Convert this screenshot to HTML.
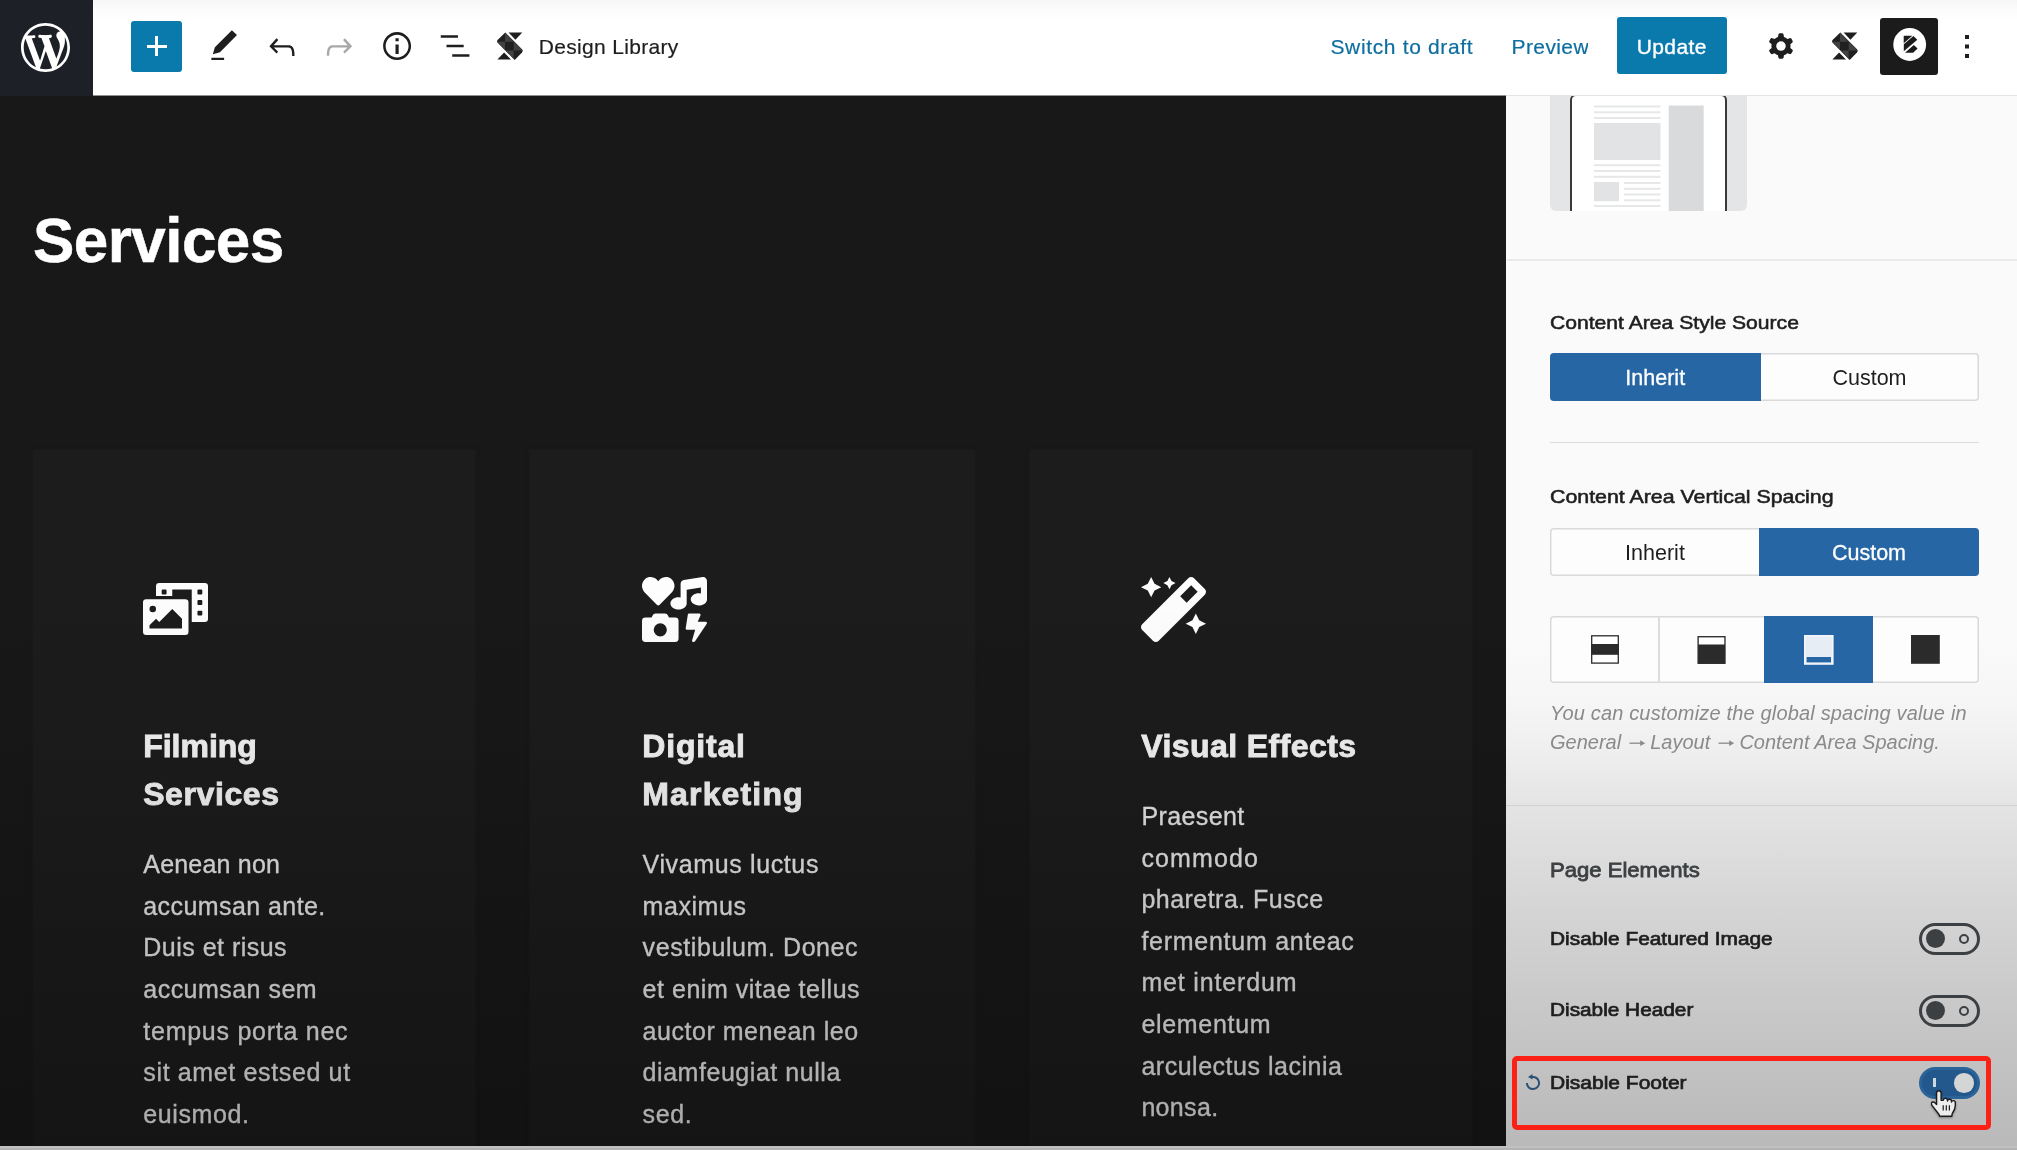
<!DOCTYPE html>
<html>
<head>
<meta charset="utf-8">
<title>Edit Page</title>
<style>
*{box-sizing:border-box;margin:0;padding:0}
html,body{width:2017px;height:1150px;overflow:hidden;background:#181818;font-family:"Liberation Sans",sans-serif}
.abs{position:absolute}
#root{position:relative;width:2017px;height:1150px;overflow:hidden;will-change:transform}
/* toolbar */
#toolbar{position:absolute;left:0;top:0;width:2017px;height:95px;background:linear-gradient(#f6f6f6 0,#fcfcfc 10px,#fff 20px)}
#tbedge{position:absolute;left:92px;top:95px;width:1414px;height:1px;background:#8f8f8f}
#wp{position:absolute;left:0;top:0;width:92.600px;height:96px;background:#1e2027}
#plus{position:absolute;left:131px;top:21px;width:51px;height:51px;background:#0a7aad;border-radius:3px}
.tbtxt{position:absolute;font-size:21px;line-height:26px;white-space:nowrap;color:#1e1e1e;-webkit-text-stroke:.2px currentColor}
.link{color:#0d6e9f}
#update{position:absolute;left:1617px;top:17px;width:109.500px;height:57px;background:#0a7aad;border-radius:3px;color:#fff;font-size:21px;line-height:59.400px;text-align:center;letter-spacing:.4px;-webkit-text-stroke:.35px #fff}
#kbox{position:absolute;left:1880.300px;top:17.600px;width:57.700px;height:57.200px;background:#1b1b1b;border-radius:3px}
/* canvas */
#canvas{position:absolute;left:0;top:95px;width:1506px;height:1055px;background:#181818}
.card{position:absolute;top:450px;height:700px;background:#1c1c1c;box-shadow:0 0 3px 1px #1b1b1b}
h1{position:absolute;left:33px;top:203px;font-size:62px;line-height:76px;font-weight:bold;color:#fff;letter-spacing:-0.55px;-webkit-text-stroke:.5px #fff;transform:scaleY(1.012);transform-origin:0 59.5px}
.ch{position:absolute;font-size:32px;line-height:48.2px;font-weight:bold;color:#f6f6f6;white-space:nowrap;-webkit-text-stroke:.9px #f6f6f6}
.cp{position:absolute;font-size:25px;line-height:41.6px;color:#e8e8e8;white-space:nowrap;-webkit-text-stroke:.3px #e8e8e8}.ch span,.cp span{display:block}
#shade{position:absolute;left:0;top:560px;width:1506px;height:586px;background:linear-gradient(rgba(0,0,0,0) 0,rgba(0,0,0,.04) 25%,rgba(0,0,0,.12) 50%,rgba(0,0,0,.2) 75%,rgba(0,0,0,.27) 100%)}
/* sidebar */
#side{position:absolute;left:1506px;top:95px;width:511px;height:1055px;background:linear-gradient(#fafafa 0px,#fafafa 545px,#f6f6f6 605px,#ededed 665px,#e4e4e4 710px,#d6d6d6 805px,#c9c9c9 905px,#bebebe 1005px,#b9b9b9 1055px);border-top:1px solid #e2e2e2}
.lbl{position:absolute;left:1550px;font-size:18.600px;line-height:24px;font-weight:normal;color:#1e1e1e;white-space:nowrap;-webkit-text-stroke:.55px currentColor;transform-origin:0 50%}
.seg{position:absolute;left:1550px;width:429px;height:48px;box-shadow:inset 0 0 0 1.5px #d9d9d9;border-radius:4px;background:#fdfdfd;overflow:hidden}
.seg div{position:absolute;top:0;height:48px;line-height:50px;text-align:center;font-size:21.5px;color:#1e1e1e}
.seg .on{background:#2766a4;color:#fff;-webkit-text-stroke:.3px #fff}
.hr{position:absolute;height:1px;background:#dcdcdc}
#bottom{position:absolute;left:0;top:1146px;width:2017px;height:4px;background:linear-gradient(#bdbdbd 0,#c2c2c2 1.500px,#b3b3b3 2.500px)}

.l2{font-size:18.500px;color:#1e1e1e;-webkit-text-stroke:.7px currentColor}
.help{position:absolute;left:1550px;font-size:20px;line-height:28px;font-style:italic;color:#8a8a8a;white-space:nowrap;letter-spacing:.17px}
.help .ar{display:inline-block;vertical-align:0px}.g1{display:inline-block;width:7.5px}.g2{display:inline-block;width:4.600px}
.tog{position:absolute;left:1918.5px;width:61px;height:31.5px;border:3px solid #3c4043;border-radius:16px}
.tog i{position:absolute;left:4px;top:3.2px;width:19px;height:19px;border-radius:50%;background:#3c4043}
.tog b{position:absolute;left:37px;top:7.6px;width:10.4px;height:10.4px;border-radius:50%;border:2.2px solid #3c4043}
.tog.on{background:#22588c;border-color:#2a6499}
.tog.on i{left:32.600px;top:3.100px;width:19.600px;height:19.600px;background:#d4d6d5}
.tog.on b{left:11.400px;top:8px;width:3.400px;height:9.400px;border:none;border-radius:0;background:#cfd8e0}
</style>
</head>
<body>
<div id="root">
<div id="canvas"></div>
<div class="card" style="left:33px;width:442px"></div>
<div class="card" style="left:530px;width:445px"></div>
<div class="card" style="left:1030px;width:442px"></div>
<h1>Services</h1>
<div class="ch" style="left:143.2px;top:721.5px"><span style="letter-spacing:-0.011px">Filming</span><span style="letter-spacing:0.59px">Services</span></div>
<div class="ch" style="left:642.3px;top:721.5px"><span style="letter-spacing:0.800px">Digital</span><span style="letter-spacing:1.150px">Marketing</span></div>
<div class="ch" style="left:1141.2px;top:721.5px"><span style="letter-spacing:0.432px">Visual Effects</span></div>
<div class="cp" style="left:143.3px;top:844.2px"><span style="letter-spacing:0.193px">Aenean non</span><span style="letter-spacing:0.423px">accumsan ante.</span><span style="letter-spacing:0.479px">Duis et risus</span><span style="letter-spacing:0.47px">accumsan sem</span><span style="letter-spacing:0.742px">tempus porta nec</span><span style="letter-spacing:0.639px">sit amet estsed ut</span><span style="letter-spacing:0.607px">euismod.</span></div>
<div class="cp" style="left:642.6px;top:844.2px"><span style="letter-spacing:0.625px">Vivamus luctus</span><span style="letter-spacing:0.547px">maximus</span><span style="letter-spacing:0.584px">vestibulum. Donec</span><span style="letter-spacing:0.524px">et enim vitae tellus</span><span style="letter-spacing:0.532px">auctor menean leo</span><span style="letter-spacing:0.543px">diamfeugiat nulla</span><span style="letter-spacing:0.578px">sed.</span></div>
<div class="cp" style="left:1141.4px;top:796.0px"><span style="letter-spacing:0.405px">Praesent</span><span style="letter-spacing:1.122px">commodo</span><span style="letter-spacing:0.472px">pharetra. Fusce</span><span style="letter-spacing:0.733px">fermentum anteac</span><span style="letter-spacing:0.837px">met interdum</span><span style="letter-spacing:0.691px">elementum</span><span style="letter-spacing:0.52px">arculectus lacinia</span><span style="letter-spacing:0.328px">nonsa.</span></div>
<svg class="abs" style="left:143px;top:583.100px" width="65" height="52" viewBox="0 0 640 512"><path fill="#fff" d="M608 0H160a32 32 0 0 0-32 32v96h160V64h192v320h128a32 32 0 0 0 32-32V32a32 32 0 0 0-32-32zM232 103a9 9 0 0 1-9 9h-30a9 9 0 0 1-9-9V73a9 9 0 0 1 9-9h30a9 9 0 0 1 9 9zm352 208a9 9 0 0 1-9 9h-30a9 9 0 0 1-9-9v-30a9 9 0 0 1 9-9h30a9 9 0 0 1 9 9zm0-104a9 9 0 0 1-9 9h-30a9 9 0 0 1-9-9v-30a9 9 0 0 1 9-9h30a9 9 0 0 1 9 9zm0-104a9 9 0 0 1-9 9h-30a9 9 0 0 1-9-9V73a9 9 0 0 1 9-9h30a9 9 0 0 1 9 9zm-168 57H32a32 32 0 0 0-32 32v288a32 32 0 0 0 32 32h384a32 32 0 0 0 32-32V192a32 32 0 0 0-32-32zM96 224a32 32 0 1 1-32 32 32 32 0 0 1 32-32zm288 224H64v-32l64-64 32 32 128-128 96 96z"/></svg>
<svg class="abs" style="left:642.3px;top:577px" width="65" height="65" viewBox="0 0 512 512"><path fill="#fff" d="M116.65 219.35a15.680 15.680 0 0 0 22.650 0l96.750-99.830c28.150-29 26.500-77.100-4.910-103.880C203.750-7.700 163-3.500 137.860 22.440L128 32.580l-9.850-10.140C93.050-3.500 52.250-7.700 24.860 15.640c-31.410 26.780-33 74.850-5 103.880zm143.920 100.490h-48l-7.080-14.240a27.390 27.390 0 0 0-25.660-17.780h-71.710a27.390 27.390 0 0 0-25.660 17.780l-7 14.240h-48A27.450 27.450 0 0 0 0 347.300v137.250A27.440 27.440 0 0 0 27.430 512h233.140A27.450 27.450 0 0 0 288 484.550V347.300a27.450 27.450 0 0 0-27.430-27.460zM144 468a52 52 0 1 1 52-52 52 52 0 0 1-52 52zm355.400-115.900h-60.580l22.360-50.750c2.100-6.650-3.930-13.210-12.180-13.210h-75.590c-6.300 0-11.660 3.900-12.500 9.100l-16.800 106.930c-1 6.300 4.880 11.890 12.500 11.890h62.310l-24.200 83c-1.890 6.650 4.200 12.900 12.230 12.900a13.260 13.260 0 0 0 10.920-5.250l92.400-138.910c4.880-6.910-1.160-15.700-10.870-15.700zM478.080.33L329.510 23.170C314.870 25.420 304 38.920 304 54.830V161.600a83.250 83.250 0 0 0-16-1.700c-35.350 0-64 21.480-64 48s28.650 48 64 48c35.200 0 63.730-21.320 64-47.660V99.660l112-17.220v47.180a83.250 83.250 0 0 0-16-1.700c-35.350 0-64 21.480-64 48s28.650 48 64 48c35.200 0 63.730-21.320 64-47.660V32c0-19.480-16-34.420-33.920-31.670z"/></svg>
<svg class="abs" style="left:1141.300px;top:577px" width="65" height="65" viewBox="0 0 512 512"><path fill="#fff" d="M224 96l16-32 32-16-32-16-16-32-16 32-32 16 32 16 16 32zM80 160l26.660-53.330L160 80l-53.340-26.670L80 0 53.340 53.330 0 80l53.340 26.670L80 160zm352 128l-26.660 53.330L352 368l53.340 26.670L432 448l26.660-53.330L512 368l-53.340-26.670L432 288zm70.620-193.770L417.770 9.380C411.530 3.120 403.340 0 395.150 0c-8.190 0-16.380 3.120-22.630 9.380L9.380 372.520c-12.500 12.500-12.500 32.760 0 45.250l84.850 84.850c6.250 6.250 14.440 9.370 22.620 9.370 8.190 0 16.380-3.120 22.630-9.370l363.140-363.150c12.500-12.480 12.500-32.750 0-45.240zM359.450 203.460l-50.910-50.910 86.600-86.600 50.910 50.910-86.600 86.600z"/></svg>


<div id="shade"></div>
<div id="side"></div>
<!-- thumbnail -->
<div class="abs" style="left:1550px;top:96px;width:197px;height:115px;background:#e4e5e6;border-radius:0 0 6px 6px"></div>
<div class="abs" style="left:1570px;top:93.500px;width:157px;height:117.500px;background:#fff;border:2px solid #3a3a3a;border-bottom:none;border-radius:6px 6px 0 0"></div>
<div class="abs" style="left:1506px;top:95px;width:511px;height:1px;background:#e4e4e4"></div>
<svg class="abs" style="left:1590px;top:100px" width="120" height="111" viewBox="1590 100 120 111">
 <g fill="#e6e7e8">
  <rect x="1594" y="105.5" width="66.5" height="2"/><rect x="1594" y="111.3" width="66.5" height="2"/><rect x="1594" y="117" width="66.5" height="2"/>
  <rect x="1594" y="123" width="66.5" height="37" fill="#e2e3e4"/>
  <rect x="1594" y="164.2" width="66.5" height="2"/><rect x="1594" y="170" width="66.5" height="2"/><rect x="1594" y="175.8" width="66.5" height="2"/>
  <rect x="1594" y="182" width="25" height="19.2" fill="#e2e3e4"/>
  <rect x="1624" y="182" width="36.5" height="2"/><rect x="1624" y="187.8" width="36.5" height="2"/><rect x="1624" y="193.5" width="36.5" height="2"/><rect x="1624" y="199.3" width="36.5" height="2"/>
  <rect x="1594" y="205" width="66.5" height="2"/>
  <rect x="1668.7" y="105.5" width="35" height="106" fill="#d9dadb"/>
 </g>
</svg>
<div class="hr" style="left:1507px;top:259px;width:510px;height:2px;background:#e9e9e9"></div>

<div class="lbl" style="top:311px;transform:scaleX(1.136)">Content Area Style Source</div>
<div class="seg" style="top:353px"><div class="on" style="left:0;width:210.5px">Inherit</div><div style="left:210px;width:219px">Custom</div></div>
<div class="hr" style="left:1550px;top:441.6px;width:429px"></div>

<div class="lbl" style="top:485.300px;transform:scaleX(1.148)">Content Area Vertical Spacing</div>
<div class="seg" style="top:528px"><div style="left:0;width:210px">Inherit</div><div class="on" style="left:209px;width:220px">Custom</div></div>

<div class="seg" style="top:616px;height:67px">
 <div style="left:107.500px;width:2px;height:67px;background:#dcdcdc"></div>
 <div class="on" style="left:214px;width:109px;height:67px"></div>
</div>
<!-- spacing icons -->
<svg class="abs" style="left:1590px;top:634px" width="352" height="32" viewBox="1590 634 352 32">
 <rect x="1591.700" y="635.800" width="26.600" height="27.300" fill="#fff" stroke="#2b2b2b" stroke-width="1.300"/>
 <rect x="1591.100" y="644" width="27.800" height="10.800" fill="#2b2b2b"/>
 <rect x="1698.100" y="636.700" width="26.900" height="26.600" fill="#2b2b2b" stroke="#2b2b2b" stroke-width="1.300"/>
 <rect x="1698.800" y="637.400" width="25.500" height="7.100" fill="#fff"/>
 <rect x="1804.800" y="635.800" width="28" height="28.200" fill="#e6edf5" stroke="#f3f6fa" stroke-width="1.600"/>
 <rect x="1806.600" y="657" width="24.400" height="5.400" fill="#2766a4"/>
 <rect x="1911" y="635" width="28.800" height="28.800" fill="#2b2b2b"/>
</svg>
<div class="help" style="top:699px">You can customize the global spacing value in</div>
<div class="help" style="top:727.500px;letter-spacing:0">General<span class="g1"></span><svg class="ar" width="17" height="12" viewBox="0 0 17 12"><path d="M0.500 6.200H12.500" fill="none" stroke="#8a8a8a" stroke-width="1.300"/><path d="M11.200 3.300L16.200 6.200 11.200 9.100z" fill="#8a8a8a"/></svg><span class="g2"></span>Layout<span class="g1"></span><svg class="ar" width="17" height="12" viewBox="0 0 17 12"><path d="M0.500 6.200H12.500" fill="none" stroke="#8a8a8a" stroke-width="1.300"/><path d="M11.200 3.300L16.200 6.200 11.200 9.100z" fill="#8a8a8a"/></svg><span class="g2"></span>Content Area Spacing.</div>
<div class="hr" style="left:1506px;top:805px;width:511px;background:#d1d1d1"></div>

<div class="lbl" style="top:857.900px;font-size:20.600px;color:#3c4043;-webkit-text-stroke:.8px #3c4043;transform:scaleX(1.072)">Page Elements</div>
<div class="lbl l2" style="top:926.700px;transform:scaleX(1.128)">Disable Featured Image</div>
<div class="tog" style="top:923px"><i></i><b></b></div>
<div class="lbl l2" style="top:998.200px;transform:scaleX(1.124)">Disable Header</div>
<div class="tog" style="top:995px"><i></i><b></b></div>

<div class="abs" style="left:1512.100px;top:1056.200px;width:479.400px;height:74.200px;border:5.400px solid #fb2117;border-radius:5px"></div>
<svg class="abs" style="left:1523.600px;top:1073.500px" width="18" height="18" viewBox="0 0 18 18"><path d="M8 3A6.100 6.100 0 1 1 2.900 9" fill="none" stroke="#2a5073" stroke-width="2"/><path d="M4 3.100L8.500 0v5.600z" fill="#2a5073"/></svg>
<div class="lbl l2" style="top:1070.500px;transform:scaleX(1.135)">Disable Footer</div>
<div class="tog on" style="top:1067px"><i></i><b></b></div>


<div id="toolbar"></div>
<div id="tbedge"></div>
<div id="wp"></div>
<div id="plus"></div>
<div class="tbtxt" style="left:538.800px;top:34.200px;letter-spacing:.32px">Design Library</div>
<div class="tbtxt link" style="left:1330.400px;top:34.100px;letter-spacing:.66px">Switch to draft</div>
<div class="tbtxt link" style="left:1511.500px;top:34.100px;letter-spacing:.4px;width:76.500px;overflow:hidden">Preview</div>
<div id="update">Update</div>
<div id="kbox"></div>

<svg class="abs" style="left:20.8px;top:22.8px" width="49" height="49" viewBox="0 0 20 20"><path fill="#fff" d="M20 10c0-5.51-4.49-10-10-10C4.48 0 0 4.49 0 10c0 5.52 4.48 10 10 10 5.51 0 10-4.48 10-10zM7.78 15.37L4.37 6.22c.55-.02 1.17-.08 1.17-.08.5-.06.44-1.13-.06-1.11 0 0-1.45.11-2.37.11-.18 0-.37 0-.58-.01C4.12 2.69 6.87 1.11 10 1.11c2.33 0 4.45.87 6.05 2.34-.68-.11-1.65.39-1.65 1.58 0 .74.45 1.36.9 2.1.35.61.55 1.36.55 2.46 0 1.49-1.4 5-1.4 5l-3.03-8.37c.54-.02.82-.17.82-.17.5-.05.44-1.25-.06-1.22 0 0-1.44.12-2.38.12-.87 0-2.33-.12-2.33-.12-.5-.03-.56 1.2-.06 1.22l.92.08 1.26 3.41zM17.41 10c.24-.64.74-1.87.43-4.25.7 1.29 1.05 2.71 1.05 4.25 0 3.29-1.73 6.24-4.4 7.78.97-2.59 1.94-5.2 2.92-7.78zM6.1 18.09C3.12 16.65 1.11 13.53 1.11 10c0-1.3.23-2.48.72-3.59C3.25 10.3 4.67 14.2 6.1 18.09zm4.03-6.63l2.58 6.98c-.86.29-1.76.45-2.71.45-.79 0-1.57-.11-2.29-.33.81-2.380 1.620-4.740 2.420-7.100z"/></svg>
<div class="abs" style="left:146.500px;top:44.600px;width:20.500px;height:3.100px;background:#fff"></div><div class="abs" style="left:155.200px;top:36.200px;width:3.300px;height:19.800px;background:#fff"></div>
<svg class="abs" style="left:204.8px;top:27.4px" width="38.2" height="38.2" viewBox="0 0 24 24"><path fill="#1e1e1e"  d="M20.1 5.1L16.9 2 6.2 12.7l-1.3 4.4 4.5-1.3L20.1 5.1zM4 20.8h8v-1.5H4v1.5z"/></svg>
<svg class="abs" style="left:262.6px;top:27.5px" width="38.2" height="38.2" viewBox="0 0 24 24"><path fill="#1e1e1e"  d="M18.3 11.7c-.6-.6-1.4-.9-2.3-.9H6.7l2.9-3.3-1.1-1-4.5 5L8.5 16l1-1-2.7-2.7H16c.5 0 .9.2 1.3.5 1 1 1 3.4 1 4.5v.3h1.5v-.2c0-1.5 0-4.3-1.5-5.7z"/></svg>
<svg class="abs" style="left:320.2px;top:27.5px" width="38.2" height="38.2" viewBox="0 0 24 24"><path fill="#a8a8a8"  d="M15.6 6.5l-1.1 1 2.9 3.3H8c-.9 0-1.7.3-2.3.9-1.4 1.5-1.4 4.2-1.4 5.6v.2h1.5v-.3c0-1.1 0-3.5 1-4.5.3-.3.7-.5 1.3-.5h9.2L14.5 15l1.1 1.1 4.6-4.6-4.600-5z"/></svg>
<svg class="abs" style="left:377.7px;top:26.9px" width="38.2" height="38.2" viewBox="0 0 24 24"><path fill="#1e1e1e"  d="M12 3.2c-4.800 0-8.800 3.900-8.800 8.800 0 4.800 3.900 8.800 8.800 8.800 4.800 0 8.800-3.900 8.800-8.800 0-4.800-4-8.800-8.800-8.800zm0 16c-4 0-7.200-3.300-7.200-7.200C4.800 8 8 4.800 12 4.800s7.200 3.300 7.200 7.200c0 4-3.200 7.200-7.200 7.200zM11 17h2v-6h-2v6zm0-8h2V7h-2v2z"/></svg>
<svg class="abs" style="left:436.3px;top:27.0px" width="38.2" height="38.2" viewBox="0 0 24 24"><path fill="#1e1e1e"  d="M13.8 5.2H3v1.5h10.800V5.200zm-3.600 12v1.500H21v-1.500H10.200zm7.200-6H6.600v1.500h10.800v-1.500z"/></svg>
<svg class="abs" style="left:497px;top:32px" width="26" height="28.500" viewBox="497 32 26 28.500">
<defs><clipPath id="bd1"><path d="M505.300 32.400L522 49.300q1.400 1.500 0 3.100L514.700 59.900 497.800 42.800q-1.400-1.500 0-3z"/></clipPath></defs>
<g clip-path="url(#bd1)"><rect x="497" y="32" width="26" height="28.500" fill="#202020"/>
<path d="M505 32.400L513.700 41.700H505zM496 41.700H505V50.400zM513.700 41.700L523 50.400H513.700zM505 50.400H513.700V60z" fill="#414141"/></g>
<path d="M508.600 32.500h13.700l-6.900 7.200z" fill="#1e1e1e"/>
<path d="M497.400 59.500h13.600l-6.900-7.100z" fill="#1e1e1e"/>
</svg>
<svg class="abs" style="left:1762px;top:27.0px" width="38.2" height="38.2" viewBox="0 0 24 24"><path fill="#1e1e1e" fill-rule="evenodd" d="M10.289 4.836A1 1 0 0111.275 4h1.306a1 1 0 01.987.836l.244 1.466c.787.26 1.503.679 2.108 1.218l1.393-.522a1 1 0 011.216.437l.653 1.130a1 1 0 01-.23 1.273l-1.148.944a6.025 6.025 0 010 2.435l1.149.946a1 1 0 01.230 1.272l-.653 1.130a1 1 0 01-1.216.437l-1.394-.522c-.605.540-1.320.958-2.108 1.218l-.244 1.466a1 1 0 01-.987.836h-1.306a1 1 0 01-.986-.836l-.244-1.466a5.995 5.995 0 01-2.108-1.218l-1.394.522a1 1 0 01-1.217-.436l-.653-1.131a1 1 0 01.230-1.272l1.149-.946a6.026 6.026 0 010-2.435l-1.148-.944a1 1 0 01-.230-1.272l.653-1.131a1 1 0 011.217-.437l1.393.522a5.994 5.994 0 012.108-1.218l.244-1.466zM14.929 12a3 3 0 11-6 0 3 3 0 016 0z"/></svg>
<svg class="abs" style="left:1832.3px;top:32.3px" width="26" height="28.500" viewBox="497 32 26 28.500">
<defs><clipPath id="bd2"><path d="M505.300 32.400L522 49.300q1.400 1.500 0 3.100L514.700 59.900 497.800 42.800q-1.400-1.500 0-3z"/></clipPath></defs>
<g clip-path="url(#bd2)"><rect x="497" y="32" width="26" height="28.500" fill="#202020"/>
<path d="M505 32.400L513.700 41.700H505zM496 41.700H505V50.400zM513.700 41.700L523 50.400H513.700zM505 50.400H513.700V60z" fill="#414141"/></g>
<path d="M508.600 32.500h13.700l-6.900 7.200z" fill="#1e1e1e"/>
<path d="M497.400 59.500h13.600l-6.900-7.100z" fill="#1e1e1e"/>
</svg>
<svg class="abs" style="left:1892.500px;top:28px" width="34" height="34" viewBox="0 0 34 34"><circle cx="16.700" cy="16.500" r="16.400" fill="#fff"/><path d="M10.700 7.800H19.300L10.700 15.200zM20.400 8.100L24.300 11.700 10.800 23.300V16.200zM20.800 17.100L24.600 20.400 20.100 24.800H12z" fill="#1b1b1b"/></svg>
<div class="abs" style="left:1965px;top:35px;width:4px;height:4px;background:#1e1e1e;box-shadow:0 9.500px 0 #1e1e1e,0 19px 0 #1e1e1e"></div>
<svg class="abs" style="left:1930.500px;top:1089.600px;filter:drop-shadow(0 1px 1px rgba(0,0,0,.35))" width="26" height="28" viewBox="0 0 26 28">
<path d="M7.800 0.800C6.500 0.800 5.600 1.700 5.600 3L5.600 14.500L3.600 12.600C2.600 11.700 1.200 11.800 0.600 12.800C0.100 13.600 0.300 14.500 1 15.300L8 24.500L8.600 26.200L20.800 26.200L21.200 23.600C23 21 24.300 18 24.300 15.500L24.300 12.600C24.300 11.300 23.400 10.600 22.400 10.600C21.300 10.600 20.600 11.300 20.500 12L20.500 11.200C20.500 9.900 19.600 9.200 18.600 9.200C17.500 9.200 16.600 9.900 16.500 11L16.500 10.400C16.500 9.100 15.500 8.300 14.400 8.300C13.300 8.300 12.400 9 12.300 10.200L10.100 10.200L10.100 3C10.100 1.700 9.100 0.800 7.800 0.800Z" fill="#ececec" stroke="#1c1c1c" stroke-width="1.400" stroke-linejoin="round"/>
<path d="M12.200 15.200v5.200M15.300 15.200v5.200M18.400 15.200v5.200" stroke="#1c1c1c" stroke-width="1.200"/>
</svg>
<div id="bottom"></div>
</div>
</body>
</html>
